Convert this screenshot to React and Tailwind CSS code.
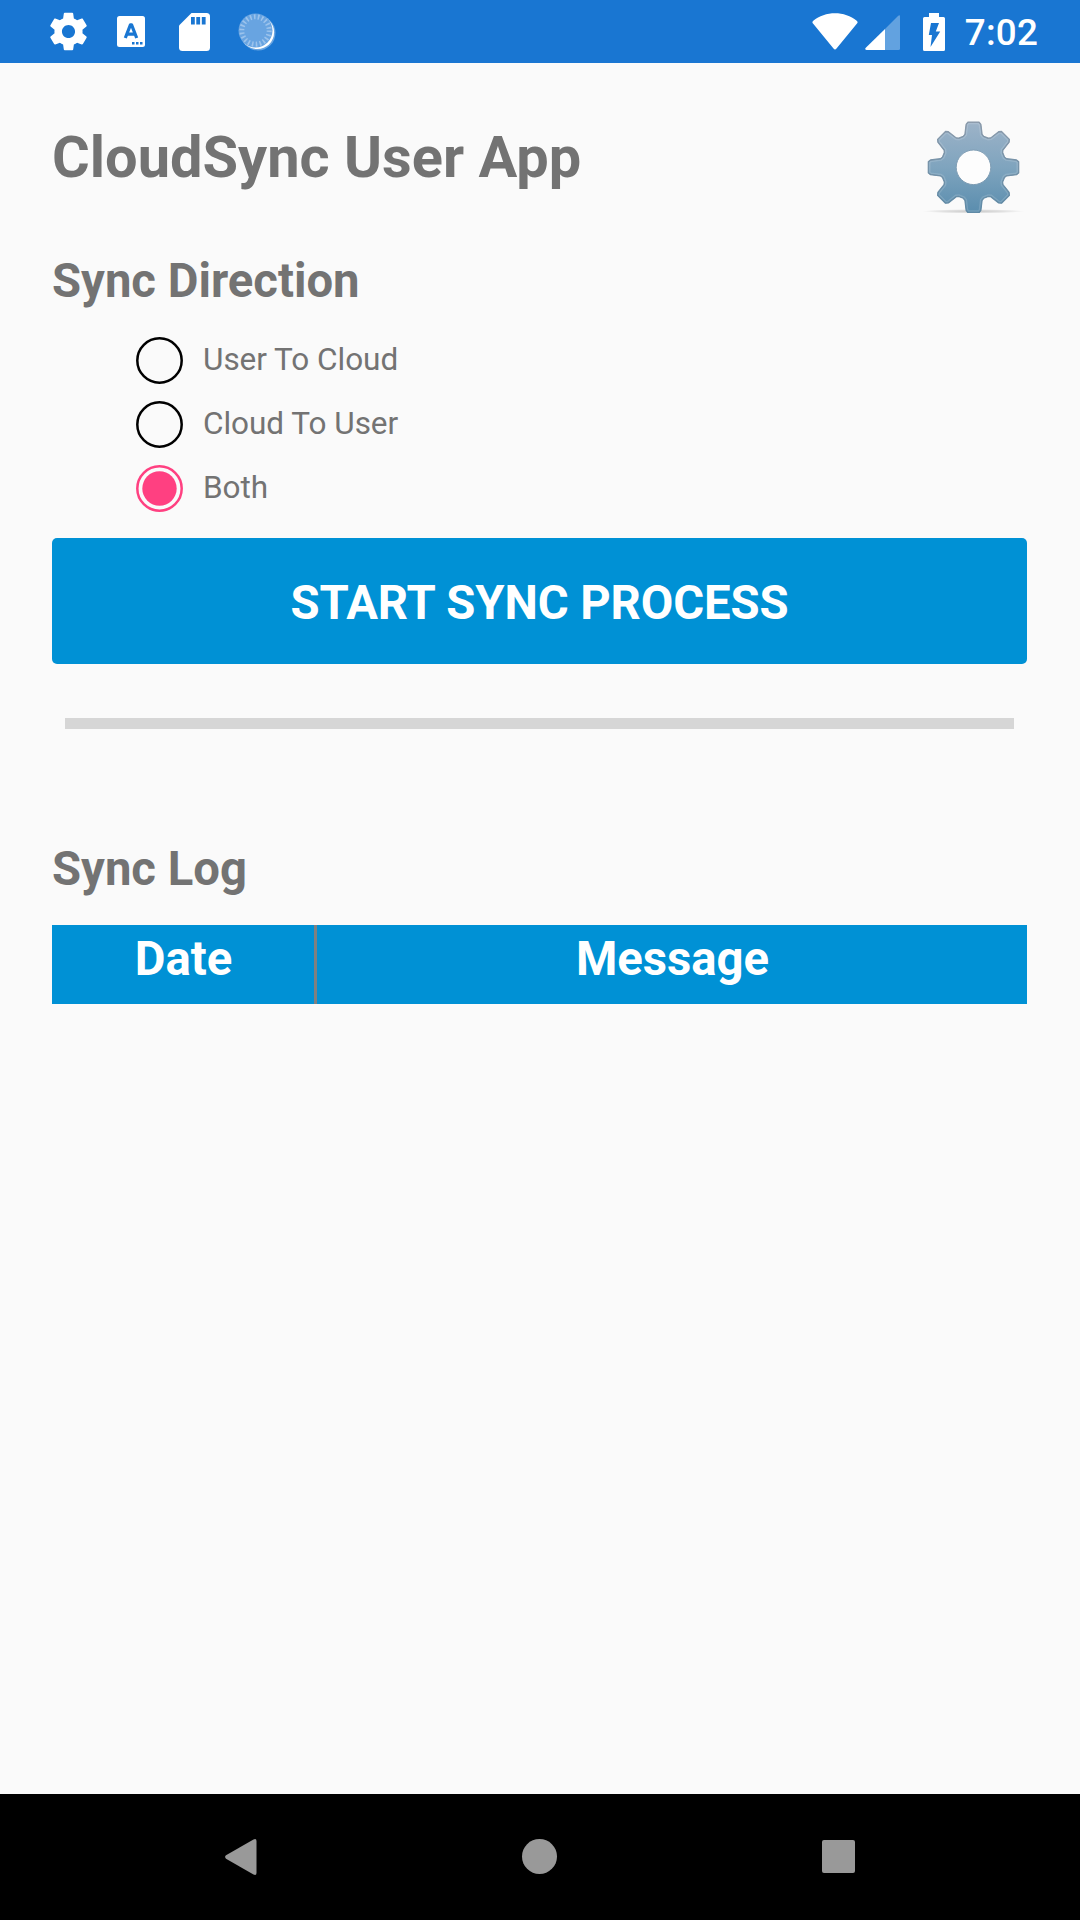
import { useState } from 'react';

const directions = ['User To Cloud', 'Cloud To User', 'Both'];

// Outline of an eight-toothed cog centred on 0,0
const tooth = [[-10.2, -31], [-8.6, -33], [-7.4, -43], [-5.6, -45.2], [5.6, -45.2], [7.4, -43], [8.6, -33], [10.2, -31]];
const gearOutline =
  'M' +
  Array.from({ length: 8 }, (_, i) => {
    const a = (i * Math.PI) / 4;
    return tooth
      .map(([x, y]) => `${(x * Math.cos(a) - y * Math.sin(a)).toFixed(2)} ${(x * Math.sin(a) + y * Math.cos(a)).toFixed(2)}`)
      .join('L');
  }).join('L') +
  'Z';

const GearImage = () => (
  <svg className="w-[104px] h-[104px]" viewBox="-52.5 -52.3 104 104">
    <defs>
      <linearGradient id="gearFill" x1="0" y1="0" x2="0" y2="1">
        <stop offset="0" stopColor="#9db3c8" />
        <stop offset="0.5" stopColor="#7fa4be" />
        <stop offset="1" stopColor="#5a8dae" />
      </linearGradient>
      <linearGradient id="gearEdge" x1="0" y1="0" x2="0" y2="1">
        <stop offset="0" stopColor="#8797a8" />
        <stop offset="1" stopColor="#5a86a3" />
      </linearGradient>
      <radialGradient id="gearShadow">
        <stop offset="0" stopColor="#000" stopOpacity="0.2" />
        <stop offset="0.6" stopColor="#000" stopOpacity="0.1" />
        <stop offset="1" stopColor="#000" stopOpacity="0" />
      </radialGradient>
      <clipPath id="gearClip">
        <path d={gearOutline} />
      </clipPath>
    </defs>
    <ellipse cx="0" cy="44" rx="51" ry="2.2" fill="url(#gearShadow)" />
    <path d={gearOutline} fill="url(#gearFill)" stroke="url(#gearEdge)" strokeWidth="1.2" strokeLinejoin="round" />
    <g clipPath="url(#gearClip)">
      <path d={gearOutline} fill="none" stroke="#fff" strokeOpacity="0.14" strokeWidth="4.5" />
      <path d={gearOutline} fill="none" stroke="url(#gearEdge)" strokeWidth="1.5" />
    </g>
    <circle r="17.3" fill="#fdfdfd" stroke="#7f9db4" strokeWidth="1" />
  </svg>
);

const StatusBar = () => (
  <div className="h-[63px] bg-[#1976d2] flex items-center justify-between pl-[46px] pr-[42px]">
    <div className="flex items-center">
      <svg className="w-[45px] h-[45px]" viewBox="0 0 24 24" fill="#fff">
        <path d="M19.43 12.98c.04-.32.07-.64.07-.98s-.03-.66-.07-.98l2.11-1.65c.19-.15.24-.42.12-.64l-2-3.46c-.12-.22-.39-.3-.61-.22l-2.49 1c-.52-.4-1.08-.73-1.69-.98l-.38-2.65C14.46 2.18 14.25 2 14 2h-4c-.25 0-.46.18-.49.42l-.38 2.65c-.61.25-1.17.59-1.69.98l-2.49-1c-.23-.09-.49 0-.61.22l-2 3.46c-.13.22-.07.49.12.64l2.11 1.65c-.04.32-.07.65-.07.98s.03.66.07.98l-2.11 1.65c-.19.15-.24.42-.12.64l2 3.46c.12.22.39.3.61.22l2.49-1c.52.4 1.08.73 1.69.98l.38 2.65c.03.24.24.42.49.42h4c.25 0 .46-.18.49-.42l.38-2.65c.61-.25 1.17-.59 1.69-.98l2.49 1c.23.09.49 0 .61-.22l2-3.46c.12-.22.07-.49-.12-.64l-2.11-1.65zM12 15.5c-1.93 0-3.5-1.57-3.5-3.5s1.57-3.5 3.5-3.5 3.5 1.57 3.5 3.5-1.57 3.5-3.5 3.5z" />
      </svg>
      <svg className="w-[28px] h-[31px] ml-[26px]" viewBox="0 0 28 31">
        <rect width="28" height="31" rx="2.5" fill="#fff" />
        <path d="M8.300 22L13.400 8.800h1.200l5.100 13.200M10.500 18.200h7" fill="none" stroke="#1976d2" strokeWidth="3.2" strokeLinejoin="round" />
        <path d="M15 26h2.500v2.500h-2.500zM19 26h2.500v2.500h-2.500zM23 26h2.500v2.500h-2.500z" fill="#1976d2" />
      </svg>
      <svg className="w-[31px] h-[38px] ml-[34px]" viewBox="0 0 31 38">
        <path d="M12.500 0H27.500Q31 0 31 3.500V34.500Q31 38 27.500 38H3.500Q0 38 0 34.500V12.500Z" fill="#fff" />
        <path d="M12 4h3.800v7.500h-3.800zM17.300 4h3.800v7.500h-3.800zM22.800 4h3.800v7.500h-3.800z" fill="#1976d2" />
      </svg>
      <svg className="w-[38px] h-[38px] ml-[28px]" viewBox="0 0 38 38">
        <circle cx="20" cy="20" r="17.500" fill="#fff" fillOpacity="0.35" />
        <circle cx="19.300" cy="19.300" r="16.800" fill="#fff" />
        <circle cx="17.500" cy="17.500" r="17" fill="#68a4e1" />
        <circle cx="17.500" cy="17.500" r="13.700" fill="none" stroke="#9cc3ec" strokeWidth="5" strokeDasharray="1.600 2.310" />
      </svg>
    </div>

    <div className="flex items-center">
      <svg className="w-[46px] h-[37px]" viewBox="0 0 46 37" fill="#fff">
        <path d="M1 10.500Q-.3 9 1.300 7.800C13-2.200 33-2.200 44.700 7.800Q46.300 9 45 10.500L24.500 35.500Q23 37.300 21.500 35.500Z" />
      </svg>
      <svg className="w-[35px] h-[35px] ml-[7px] mt-[2px]" viewBox="0 0 35 35" fill="#fff">
        <path d="M20 14V35H1.500Q-.8 34.600.8 32.800Z" />
        <path d="M20 14L33 1Q35-.5 35 1.500V33.500Q35 35 33.500 35H20Z" fillOpacity="0.32" />
      </svg>
      <svg className="w-[22px] h-[38px] ml-[23px]" viewBox="0 0 22 38">
        <path d="M6 0H16V4H20.500Q22 4 22 5.500V36.500Q22 38 20.500 38H1.500Q0 38 0 36.500V5.500Q0 4 1.500 4H6Z" fill="#fff" />
        <path d="M8 10H16L12.800 18.500H17.200L7.500 34L9 22H5.800Z" fill="#1976d2" />
      </svg>
      <span className="ml-[20px] pt-[3px] text-[36.75px] leading-[44px] tracking-[0.2px] font-medium text-white">7:02</span>
    </div>
  </div>
);

const RadioOption = ({ label, checked, onSelect }) => (
  <button onClick={onSelect} className="flex items-center h-16 gap-[20.5px]">
    <svg className="w-[47px] h-[47px]" viewBox="0 0 47 47">
      <circle cx="23.5" cy="23.5" r="22.2" fill="none" stroke={checked ? '#ff4081' : '#000'} strokeWidth="2.5" />
      {checked && <circle cx="23.5" cy="23.5" r="17.2" fill="#ff4081" />}
    </svg>
    <span className="text-[31.5px] leading-[64px] tracking-[-0.03px]">{label}</span>
  </button>
);

const NavigationBar = () => (
  <div className="h-[126px] pb-px bg-black flex items-center justify-between pl-[225px] pr-[225px]">
    <svg className="w-[32px] h-[36px]" viewBox="0 0 32 36" fill="#999">
      <path d="M1 16.300L28.500.5Q31.500-.8 31.500 2V34Q31.500 36.800 28.500 35.500L1 19.700Q-.8 18 1 16.300Z" />
    </svg>
    <div className="w-[35px] h-[35px] rounded-full bg-[#999]" />
    <div className="w-[33px] h-[33px] rounded-[2px] bg-[#999]" />
  </div>
);

const App = () => {
  const [direction, setDirection] = useState('Both');

  return (
    <div className="w-[1080px] h-[1920px] flex flex-col bg-[#fafafa] text-[#737373] font-['Roboto',sans-serif]">
      <StatusBar />

      <main className="flex-1 pl-[52px] pr-[53px]">
        {/* Title and settings */}
        <div className="h-[190px] flex justify-between items-start">
          <h1 className="pt-[60px] text-[57.75px] leading-[68px] font-bold">CloudSync User App</h1>
          <div className="pt-[52px] pr-[2px]">
            <GearImage />
          </div>
        </div>

        <h2 className="text-[47.25px] leading-[56px] font-bold">Sync Direction</h2>
        <div className="mt-[19px] pl-[83.5px] flex flex-col items-start">
          {directions.map((d) => (
            <RadioOption key={d} label={d} checked={d === direction} onSelect={() => setDirection(d)} />
          ))}
        </div>

        <button className="mt-[18px] w-full h-[126px] pt-[4px] rounded-[5px] bg-[#0091d5] text-white text-[47.25px] leading-[56px] tracking-[-0.08px] font-bold">
          START SYNC PROCESS
        </button>

        {/* Progress track */}
        <div className="mt-[54px] mx-[13px] h-[11px] bg-[#d6d6d6]" />

        <h2 className="mt-[112px] text-[47.25px] leading-[56px] font-bold">Sync Log</h2>
        <div className="mt-[28px] h-[79px] flex bg-[#0091d5] text-white text-[47.25px] leading-[56px] font-bold text-center">
          <div className="w-[265px] pt-[6px] pl-px border-r-[3px] border-[#808080]">Date</div>
          <div className="flex-1 pt-[6px] pl-px">Message</div>
        </div>
      </main>

      <NavigationBar />
    </div>
  );
};

export default App;
